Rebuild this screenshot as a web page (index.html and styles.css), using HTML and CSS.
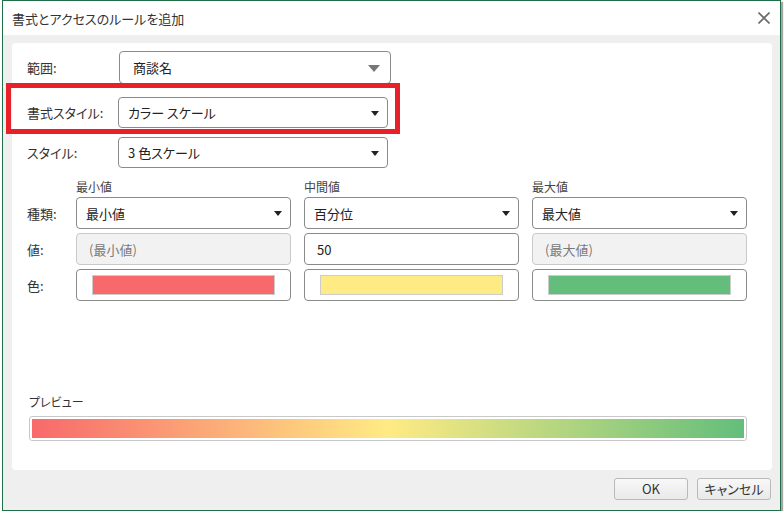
FILE: index.html
```html
<!DOCTYPE html>
<html lang="ja">
<head>
<meta charset="utf-8">
<title>書式とアクセスのルールを追加</title>
<link rel="stylesheet" href="styles.css">
</head>
<body>
<div class="dialog">
  <div class="titlebar">
    <span class="title">書式とアクセスのルールを追加</span>
    <svg class="close" width="12" height="12" viewBox="0 0 12 12"><path d="M0.5 0.5L11.5 11.5M11.5 0.5L0.5 11.5" stroke="#6b6b6b" stroke-width="1.6" fill="none"/></svg>
  </div>
  <div class="body">
    <div class="panel">
      <div class="row row-range">
        <span class="label">範囲:</span>
        <div class="select select-range"><span class="val">商談名</span><span class="arrow-gray"></span></div>
      </div>
      <div class="row row-format">
        <span class="label">書式スタイル:</span>
        <div class="select select-top"><span class="val">カラー スケール</span><span class="arrow"></span></div>
        <div class="highlight"></div>
      </div>
      <div class="row row-style">
        <span class="label">スタイル:</span>
        <div class="select select-top"><span class="val">3 色スケール</span><span class="arrow"></span></div>
      </div>
      <div class="scale">
        <span></span>
        <span class="colhead">最小値</span>
        <span class="colhead">中間値</span>
        <span class="colhead">最大値</span>

        <span class="label">種類:</span>
        <div class="select"><span class="val">最小値</span><span class="arrow"></span></div>
        <div class="select"><span class="val">百分位</span><span class="arrow"></span></div>
        <div class="select"><span class="val">最大値</span><span class="arrow"></span></div>

        <span class="label">値:</span>
        <div class="input disabled">(最小値)</div>
        <div class="input">50</div>
        <div class="input disabled">(最大値)</div>

        <span class="label">色:</span>
        <div class="colorbox"><div class="swatch red"></div></div>
        <div class="colorbox"><div class="swatch yellow"></div></div>
        <div class="colorbox"><div class="swatch green"></div></div>
      </div>
      <div class="preview">
        <span class="preview-label">プレビュー</span>
        <div class="preview-bar"><div class="gradient"></div></div>
      </div>
    </div>
    <div class="footer">
      <button class="btn">OK</button>
      <button class="btn">キャンセル</button>
    </div>
  </div>
</div>
</body>
</html>
```
FILE: styles.css
```css
* { box-sizing: border-box; }
html, body { margin: 0; padding: 0; background: #ffffff; }
body {
  padding: 0 0 0 2px;
  font-family: "Noto Sans CJK JP", "Noto Sans", sans-serif;
  font-feature-settings: "palt";
  color: #333333;
  font-size: 13px;
}
.dialog {
  width: 779px;
  height: 511px;
  border: 1px solid #1f6e45;
  box-shadow: 2px 2px 1px rgba(0, 0, 0, 0.35);
  display: flex;
  flex-direction: column;
  background: #efefef;
}
.titlebar {
  height: 34px;
  background: #ffffff;
  display: flex;
  align-items: center;
  justify-content: space-between;
  padding: 0 10px 0 9px;
}
.title { font-size: 13px; color: #333; }
.close { display: block; }
.body {
  flex: 1;
  display: flex;
  flex-direction: column;
  padding: 8px 8px 0 9px;
}
.panel {
  background: #ffffff;
  border-radius: 4px;
  height: 427px;
  padding: 8px 0 0 15px;
  position: relative;
}
.row {
  display: flex;
  align-items: center;
  position: relative;
}
.row .label { width: 91px; }
.label { color: #333; font-size: 13px; }
.row-range { height: 33px; }
.row-format { height: 31px; margin-top: 13px; }
.row-style { height: 31px; margin-top: 9px; }
.select {
  position: relative;
  height: 32px;
  border: 1px solid #8a8a8a;
  border-radius: 4px;
  background: #fff;
  display: flex;
  align-items: center;
  padding-left: 9px;
  color: #222;
}
.select-top { width: 270px; height: 31px; padding-left: 9px; }
.select-range { width: 272px; height: 33px; margin-left: 1px; padding-left: 13px; }
.arrow {
  position: absolute;
  right: 8px;
  top: 50%;
  margin-top: -2px;
  width: 0;
  height: 0;
  border-left: 4px solid transparent;
  border-right: 4px solid transparent;
  border-top: 5px solid #222;
}
.arrow-gray {
  position: absolute;
  right: 10px;
  top: 50%;
  margin-top: -3px;
  width: 0;
  height: 0;
  border-left: 6px solid transparent;
  border-right: 6px solid transparent;
  border-top: 7px solid #777;
}
.highlight {
  position: absolute;
  left: -21px;
  top: -14px;
  width: 394px;
  height: 51px;
  border: 5px solid #e8202a;
  pointer-events: none;
}
.scale {
  display: grid;
  grid-template-columns: 36px 215px 215px 215px;
  column-gap: 13px;
  grid-template-rows: 25px 32px 32px 32px;
  row-gap: 4px;
  margin-top: 0;
  align-items: center;
}
.scale .colhead {
  font-size: 12px;
  line-height: 16px;
  color: #444;
  align-self: end;
  margin-bottom: -2px;
}
.scale .select { height: 32px; }
.input {
  height: 32px;
  border: 1px solid #8a8a8a;
  border-radius: 4px;
  display: flex;
  align-items: center;
  padding-left: 12px;
  color: #222;
}
.input.disabled {
  background: #f2f2f2;
  border-color: #c9c9c9;
  color: #7a7a7a;
}
.colorbox {
  height: 32px;
  border: 1px solid #8a8a8a;
  border-radius: 4px;
  padding: 5px 15px;
}
.swatch {
  height: 20px;
  border: 1px solid #cccccc;
}
.swatch.red { background: #f8696b; }
.swatch.yellow { background: #ffeb84; }
.swatch.green { background: #63be7b; }
.preview {
  margin-top: 93px;
  margin-left: 2px;
  display: flex;
  flex-direction: column;
}
.preview-label { font-size: 12px; color: #333; line-height: 16px; }
.preview-bar {
  margin-top: 6px;
  width: 718px;
  height: 25px;
  border: 1px solid #c8c8c8;
  border-radius: 3px;
  padding: 2px;
}
.gradient {
  height: 100%;
  background: linear-gradient(to right, #f8696b, #ffeb84 50%, #63be7b);
}
.footer {
  display: flex;
  justify-content: flex-end;
  gap: 9px;
  padding: 8px 1px 0 0;
}
.btn {
  width: 74px;
  height: 22px;
  border: 1px solid #b9b9b9;
  border-radius: 3px;
  background: linear-gradient(#f8f8f8, #e9e9e9);
  font-family: "Noto Sans CJK JP", "Noto Sans", sans-serif;
  font-feature-settings: "palt";
  font-size: 13px;
  color: #333;
  padding: 0;
  line-height: 20px;
}
```
